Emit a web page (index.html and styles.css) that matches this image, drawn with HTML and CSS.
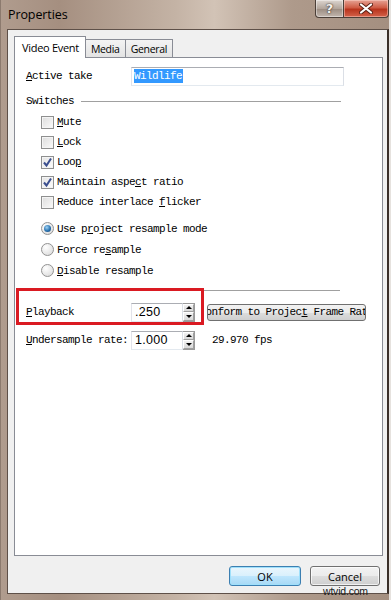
FILE: index.html
```html
<!DOCTYPE html>
<html lang="en">
<head>
    <meta charset="UTF-8">
    <meta name="viewport" content="width=device-width, initial-scale=1.0">
    <title>Properties</title>
    <link rel="stylesheet" href="styles.css">
</head>
<body>
    <div class="window">
        <div class="titlebar">
            <span class="title">Properties</span>
            <div class="caption-buttons">
                <span class="cap-btn help">?</span>
                <span class="cap-btn close">
                    <svg width="14" height="11" viewBox="0 0 14 11">
                        <path d="M2 1.5 L12 9.5 M12 1.5 L2 9.5" stroke="#5a2015" stroke-width="4" stroke-linecap="round"/>
                        <path d="M2 1.5 L12 9.5 M12 1.5 L2 9.5" stroke="#ffffff" stroke-width="2.2" stroke-linecap="round"/>
                    </svg>
                </span>
            </div>
        </div>

        <div class="client">
            <div class="tabs">
                <span class="tab selected">Video Event</span>
                <span class="tab">Media</span>
                <span class="tab">General</span>
            </div>

            <div class="panel">
                <!-- Active take -->
                <div class="field-row">
                    <span class="field-label"><u>A</u>ctive take</span>
                    <div class="textbox"><span class="text-selected">Wildlife</span></div>
                </div>

                <!-- Switches -->
                <div class="group-title">
                    <span>Switches</span>
                    <span class="rule"></span>
                </div>
                <div class="options">
                    <div class="option"><span class="check"></span><span><u>M</u>ute</span></div>
                    <div class="option"><span class="check"></span><span><u>L</u>ock</span></div>
                    <div class="option"><span class="check checked"><svg width="11" height="11" viewBox="0 0 11 11"><path d="M2 5.5 L4.5 8.5 L9 1.5" fill="none" stroke="#3b4f8f" stroke-width="2"/></svg></span><span>Loo<u>p</u></span></div>
                    <div class="option"><span class="check checked"><svg width="11" height="11" viewBox="0 0 11 11"><path d="M2 5.5 L4.5 8.5 L9 1.5" fill="none" stroke="#3b4f8f" stroke-width="2"/></svg></span><span>Maintain aspe<u>c</u>t ratio</span></div>
                    <div class="option"><span class="check"></span><span>Reduce interlace <u>f</u>licker</span></div>
                </div>
                <div class="options radios">
                    <div class="option"><span class="radio on"></span><span>Use p<u>r</u>oject resample mode</span></div>
                    <div class="option"><span class="radio"></span><span>Force re<u>s</u>ample</span></div>
                    <div class="option"><span class="radio"></span><span><u>D</u>isable resample</span></div>
                </div>

                <div class="separator"></div>

                <!-- Playback -->
                <div class="field-row playback">
                    <span class="field-label"><u>P</u>layback</span>
                    <div class="spin-box">.250</div>
                    <div class="spinner"><span class="spin up"></span><span class="spin down"></span></div>
                    <button class="conform"><span>Conform to Projec<u>t</u> Frame Rate</span></button>
                </div>
                <div class="field-row undersample">
                    <span class="field-label"><u>U</u>ndersample rate:</span>
                    <div class="spin-box">1.000</div>
                    <div class="spinner"><span class="spin up"></span><span class="spin down"></span></div>
                    <span class="fps">29.970 fps</span>
                </div>
            </div>

            <div class="dialog-buttons">
                <button class="btn default">OK</button>
                <button class="btn">Cancel</button>
            </div>
        </div>

        <span class="highlight"></span>
        <span class="watermark">wtvid.com</span>
    </div>
</body>
</html>
```

FILE: styles.css
```css
* {
    box-sizing: border-box;
}
body {
    margin: 0;
    background: #e6e2de;
}
.window {
    position: relative;
    width: 389px;
    height: 600px;
    display: flex;
    flex-direction: column;
    padding: 0 0 6px 6px;
    background: linear-gradient(90deg, #b09c8e 0%, #a58f80 15%, #c4b3a5 45%, #d2c3b6 55%, #ae9a8b 75%, #a48f80 100%);
    border-left: 1px solid #8c7a6e;
    overflow: hidden;
}
.titlebar {
    height: 29px;
    display: flex;
    align-items: flex-start;
    justify-content: space-between;
    flex-shrink: 0;
}
.title {
    margin: 6px 0 0 1px;
    font-family: "Open Sans", sans-serif;
    font-size: 12.5px;
    color: #000;
    letter-spacing: -0.1px;
}
.caption-buttons {
    display: flex;
}
.cap-btn {
    height: 18px;
    display: flex;
    align-items: center;
    justify-content: center;
    border: 1px solid #4b3f38;
    border-top: none;
}
.help {
    width: 29px;
    border-radius: 0 0 0 4px;
    background: linear-gradient(#ddd6d0, #b3a69c 50%, #9a8b80 51%, #c2b7ae);
    font-family: "DejaVu Sans", sans-serif;
    font-weight: bold;
    font-size: 13px;
    color: #f4f0ec;
    text-shadow: 0 0 2px #3c322c, 0 0 1px #3c322c;
    box-shadow: inset 0 0 0 1px rgba(255, 255, 255, 0.4);
}
.close {
    width: 45px;
    border-left: none;
    border-radius: 0 0 4px 0;
    background: linear-gradient(#e6a395, #cf5c45 45%, #b8341d 55%, #d4624a);
    box-shadow: inset 0 0 0 1px rgba(255, 220, 210, 0.45);
}
.client {
    flex: 1;
    display: flex;
    flex-direction: column;
    padding: 6px 4px 0 6px;
    background: #f0f0f0;
    border: 1px solid #5e5048;
    border-right: 2px solid #3a2f29;
    font-family: "Liberation Mono", monospace;
    font-size: 11px;
    letter-spacing: -0.6px;
    color: #000;
}

/* tabs */
.tabs {
    display: flex;
    align-items: flex-end;
    height: 21px;
    position: relative;
    z-index: 1;
}
.tab {
    height: 18px;
    padding: 0 5px;
    margin-left: -1px;
    display: flex;
    align-items: center;
    border: 1px solid #898c95;
    border-bottom: none;
    background: linear-gradient(#f3f3f3, #e3e3e3);
    font-family: "Open Sans", sans-serif;
    font-size: 10.5px;
    letter-spacing: -0.3px;
}
.tab.selected {
    margin-left: 0;
    height: 22px;
    margin-bottom: -1px;
    padding: 0 6px 1px 7px;
    background: #fff;
    font-size: 11px;
}
.panel {
    flex: 0 0 499px;
    background: #fff;
    border: 1px solid #898c95;
    padding: 8px 0 0 11px;
}

/* rows */
.field-row {
    display: flex;
    align-items: center;
    height: 20px;
}
.field-label {
    width: 105px;
    flex-shrink: 0;
}
.textbox {
    width: 213px;
    height: 19px;
    border: 1px solid #abadb3;
    border-color: #abadb3 #dbdfe6 #e3e9ef #e2e3ea;
    padding: 2px 2px;
    display: flex;
    align-items: center;
}
.text-selected {
    background: #3399ff;
    color: #fff;
    padding: 1px 1px 1px 0;
}
.group-title {
    margin-top: 5px;
    height: 20px;
    width: 315px;
    display: flex;
    align-items: center;
    gap: 7px;
}
.rule {
    flex: 1;
    height: 1px;
    background: #a0a0a0;
    box-shadow: 0 1px 0 #fff;
}
.options {
    margin: 1px 0 0 15px;
}
.option {
    height: 20px;
    display: flex;
    align-items: center;
    gap: 3px;
}
.radios {
    margin-top: 6px;
}
.radios .option {
    height: 21px;
}
.check {
    width: 13px;
    height: 13px;
    border: 1px solid #8e8f8f;
    background: linear-gradient(135deg, #dcdcdc, #fafafa);
    box-shadow: inset 0 0 0 1px #f4f4f4;
    display: flex;
    align-items: center;
    justify-content: center;
}
.check.checked {
    background: linear-gradient(135deg, #e4e4e4, #fdfdfd);
}
.radio {
    width: 13px;
    height: 13px;
    border-radius: 50%;
    border: 1px solid #929292;
    background: radial-gradient(circle at 35% 30%, #ffffff, #d6d6d6);
    display: flex;
    align-items: center;
    justify-content: center;
}
.radio.on::after {
    content: "";
    width: 7px;
    height: 7px;
    border-radius: 50%;
    background: radial-gradient(circle at 40% 35%, #9fd3f5, #2a73b0 55%, #0f3c6e);
}
.separator {
    margin-top: 9px;
    width: 314px;
    height: 1px;
    background: #a0a0a0;
}
.playback {
    margin-top: 11px;
}
.undersample {
    margin-top: 8px;
}
.spin-box {
    width: 52px;
    height: 19px;
    padding-left: 3px;
    display: flex;
    align-items: center;
    border: 1px solid #abadb3;
    border-color: #abadb3 #dbdfe6 #e3e9ef #e2e3ea;
    font-family: "Liberation Sans", sans-serif;
    font-size: 12.5px;
    letter-spacing: 0.3px;
}
.spinner {
    width: 12px;
    height: 19px;
    display: flex;
    flex-direction: column;
    border: 1px solid #9a9a9a;
    border-left: none;
    background: #e8e8e8;
}
.spin {
    flex: 1;
    display: flex;
    align-items: center;
    justify-content: center;
    border: 1px solid #fff;
    border-right-color: #a0a0a0;
    border-bottom-color: #a0a0a0;
    background: linear-gradient(#f2f2f2, #d8d8d8);
}
.spin::after {
    content: "";
    border-left: 3px solid transparent;
    border-right: 3px solid transparent;
}
.up::after {
    border-bottom: 3px solid #000;
}
.down::after {
    border-top: 3px solid #000;
}
.conform {
    margin-left: 12px;
    width: 159px;
    height: 17px;
    display: flex;
    justify-content: center;
    align-items: center;
    overflow: hidden;
    white-space: nowrap;
    padding: 0;
    border: 1px solid #707070;
    border-radius: 3px;
    background: linear-gradient(#f2f2f2 0%, #ebebeb 50%, #dddddd 51%, #cfcfcf 100%);
    font-family: "Liberation Mono", monospace;
    font-size: 11px;
    letter-spacing: -0.6px;
    color: #000;
}
.conform span {
    flex-shrink: 0;
}
.fps {
    margin-left: 17px;
}

/* dialog buttons */
.dialog-buttons {
    margin-top: 10px;
    display: flex;
    justify-content: flex-end;
    gap: 9px;
    padding-right: 3px;
}
.btn {
    height: 20px;
    width: 70px;
    border: 1px solid #707070;
    border-radius: 3px;
    background: linear-gradient(#f2f2f2 0%, #ebebeb 50%, #dddddd 51%, #cfcfcf 100%);
    box-shadow: inset 0 0 0 1px rgba(255, 255, 255, 0.7);
    font-family: "Open Sans", sans-serif;
    font-size: 11px;
    color: #000;
    padding: 0;
}
.btn.default {
    width: 72px;
    border-color: #3c7fb1;
    background: linear-gradient(#eaf6fd 0%, #d9f0fc 50%, #bee6fd 51%, #a7d9f5 100%);
    box-shadow: inset 0 0 0 1px #9fe0fb;
}

/* overlays */
.highlight {
    position: absolute;
    left: 15px;
    top: 288px;
    width: 188px;
    height: 37px;
    border: 3px solid #da1a22;
}
.watermark {
    position: absolute;
    left: 322px;
    top: 585px;
    font-family: "Liberation Sans", sans-serif;
    font-size: 10.5px;
    letter-spacing: -0.2px;
    color: #1a1a1a;
}
```
